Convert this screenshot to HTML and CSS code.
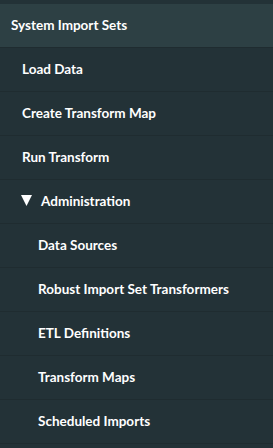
FILE: index.html
```html
<!DOCTYPE html>
<html lang="en">
<head>
    <meta charset="UTF-8">
    <meta name="viewport" content="width=device-width, initial-scale=1.0">
    <title>System Import Sets</title>
    <link rel="stylesheet" href="styles.css">
</head>
<body>
    <nav class="sidebar">
        <div class="module-header">System Import Sets</div>
        <ul class="module-list">
            <li><a href="#">Load Data</a></li>
            <li><a href="#">Create Transform Map</a></li>
            <li><a href="#">Run Transform</a></li>
            <li class="section">
                <a href="#" class="section-toggle">
                    <svg class="caret" width="11" height="11" viewBox="0 0 11 11"><path d="M0 0H11L5.5 11Z" fill="#fff"/></svg>Administration
                </a>
                <ul class="sub-list">
                    <li><a href="#">Data Sources</a></li>
                    <li><a href="#">Robust Import Set Transformers</a></li>
                    <li><a href="#">ETL Definitions</a></li>
                    <li><a href="#">Transform Maps</a></li>
                    <li><a href="#">Scheduled Imports</a></li>
                </ul>
            </li>
        </ul>
    </nav>
</body>
</html>
```

FILE: styles.css
```css
body {
    margin: 0;
    padding: 0;
    background-color: #233237;
    font-family: Lato, "Open Sans", sans-serif;
    font-size: 13.5px;
    font-weight: bold;
    color: #ffffff;
}
.sidebar {
    padding-top: 4px;
}
.module-header {
    background-color: #2d4044;
    height: 43px;
    line-height: 43px;
    padding-left: 11px;
    border-bottom: 1px solid #1f2c30;
}
.module-list,
.sub-list {
    list-style: none;
    margin: 0;
    padding: 0;
}
.module-list a {
    display: block;
    color: #ffffff;
    text-decoration: none;
    height: 43px;
    line-height: 43px;
    padding-left: 22px;
    border-bottom: 1px solid #1f2c30;
}
.sub-list a {
    padding-left: 38px;
}
.section-toggle {
    display: flex;
    align-items: center;
}
.caret {
    margin-left: -1px;
    margin-right: 9px;
}
```
